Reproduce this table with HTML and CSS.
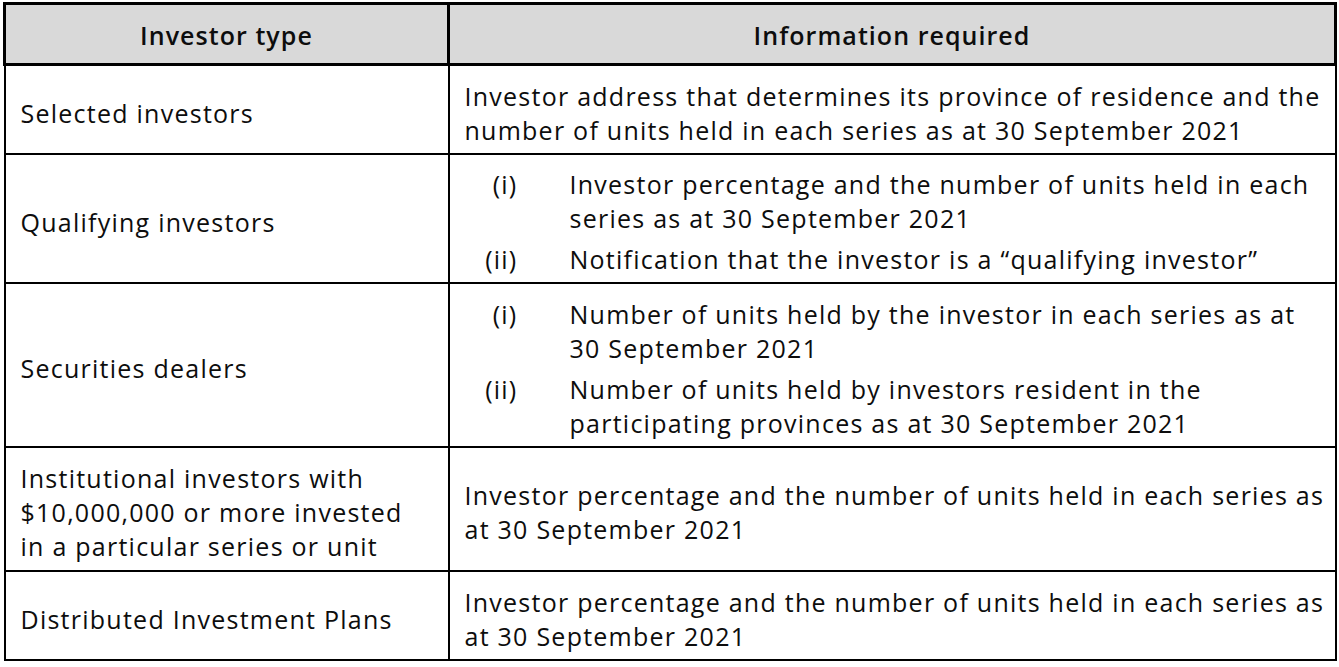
FILE: index.html
```html
<!DOCTYPE html>
<html lang="en">
<head>
<meta charset="utf-8">
<title>Investor information</title>
<link rel="stylesheet" href="styles.css">
</head>
<body>
<table class="info-table">
  <colgroup>
    <col class="col-type">
    <col class="col-info">
  </colgroup>
  <thead>
    <tr>
      <th>Investor type</th>
      <th>Information required</th>
    </tr>
  </thead>
  <tbody>
    <tr class="row-1">
      <td class="type">Selected investors</td>
      <td class="info">Investor address that determines its province of residence and the number of units held in each series as at 30 September 2021</td>
    </tr>
    <tr class="row-2">
      <td class="type">Qualifying investors</td>
      <td class="info">
        <ol class="items">
          <li><span class="num">(i)</span><span class="txt">Investor percentage and the number of units held in each series as at 30 September 2021</span></li>
          <li><span class="num">(ii)</span><span class="txt">Notification that the investor is a “qualifying investor”</span></li>
        </ol>
      </td>
    </tr>
    <tr class="row-3">
      <td class="type">Securities dealers</td>
      <td class="info">
        <ol class="items">
          <li><span class="num">(i)</span><span class="txt">Number of units held by the investor in each series as at 30 September 2021</span></li>
          <li><span class="num">(ii)</span><span class="txt">Number of units held by investors resident in the participating provinces as at 30 September 2021</span></li>
        </ol>
      </td>
    </tr>
    <tr class="row-4">
      <td class="type">Institutional investors with $10,000,000 or more invested in a particular series or unit</td>
      <td class="info">Investor percentage and the number of units held in each series as at 30 September 2021</td>
    </tr>
    <tr class="row-5">
      <td class="type">Distributed Investment Plans</td>
      <td class="info">Investor percentage and the number of units held in each series as at 30 September 2021</td>
    </tr>
  </tbody>
</table>
</body>
</html>
```

FILE: styles.css
```css
html, body {
  margin: 0;
  padding: 0;
  background: #ffffff;
}

body {
  font-family: "Open Sans", "Noto Sans", "Liberation Sans", sans-serif;
  color: #0d0d0d;
  padding: 2px 0 0 3px;
}

.info-table {
  border-collapse: collapse;
  width: 1334px;
  table-layout: fixed;
  font-size: 25px;
  line-height: 34px;
  letter-spacing: 1.25px;
}

.col-type { width: 444px; }

.info-table th {
  background: #d9d9d9;
  border: 3px solid #000;
  height: 56px;
  padding: 2px 0 0;
  font-weight: 600;
  font-size: 25px;
  letter-spacing: 1.05px;
  text-align: center;
  vertical-align: middle;
}

.info-table td {
  border: 2px solid #000;
  padding: 7px 12px 1px 15px;
  vertical-align: middle;
  text-align: left;
}

.info-table td.type {
  padding-right: 24px;
}

.info-table td.info {
  padding-right: 8px;
}

.row-1 td { height: 79px; }
.row-2 td { height: 119px; }
.row-3 td { height: 154px; }
.row-4 td { height: 114px; }
.row-5 td { height: 79px; }

.items {
  list-style: none;
  margin: 0;
  padding: 0;
  display: flex;
  flex-direction: column;
  gap: 7px;
}

.items li {
  display: grid;
  grid-template-columns: 53px 1fr;
  column-gap: 52px;
}

.items .num {
  text-align: right;
}
```
